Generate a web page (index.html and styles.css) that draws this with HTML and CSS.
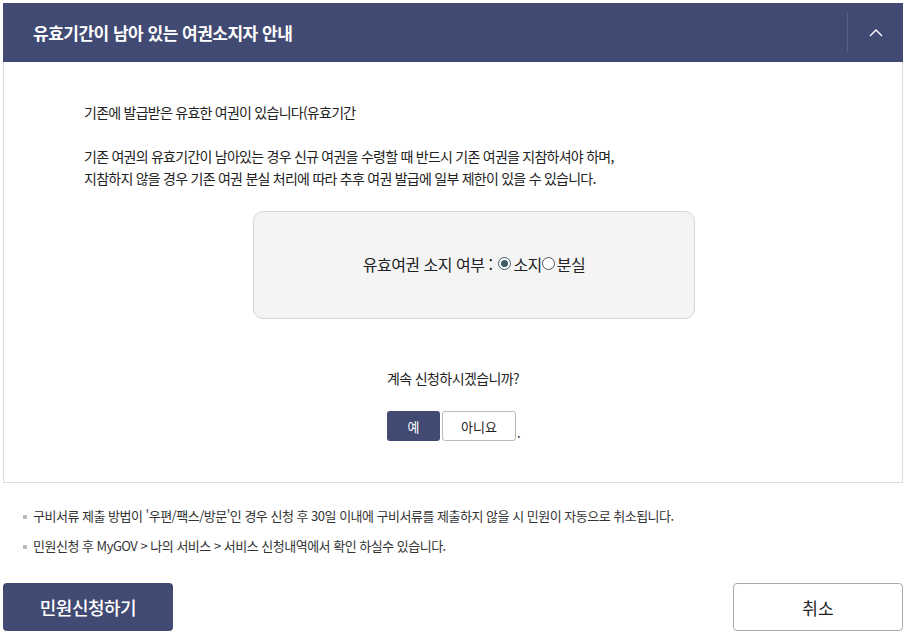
FILE: index.html
```html
<!DOCTYPE html>
<html lang="ko">
<head>
<meta charset="utf-8">
<link rel="stylesheet" href="styles.css">
</head>
<body>
<div class="page">
  <section class="panel">
    <header class="panel-head">
      <h2 class="panel-title">유효기간이 남아 있는 여권소지자 안내</h2>
      <button class="toggle" aria-label="접기">
        <svg width="14" height="9" viewBox="0 0 14 9"><path d="M1 8 L7 2 L13 8" fill="none" stroke="#fff" stroke-width="1.4"/></svg>
      </button>
    </header>
    <div class="panel-body">
      <p class="para">기존에 발급받은 유효한 여권이 있습니다(유효기간</p>
      <p class="para">기존 여권의 유효기간이 남아있는 경우 신규 여권을 수령할 때 반드시 기존 여권을 지참하셔야 하며,<br>지참하지 않을 경우 기존 여권 분실 처리에 따라 추후 여권 발급에 일부 제한이 있을 수 있습니다.</p>
      <div class="choice-box">
        <span class="choice-label">유효여권 소지 여부 :</span>
        <label class="radio"><span class="dot checked"></span>소지</label>
        <label class="radio"><span class="dot"></span>분실</label>
      </div>
      <p class="question">계속 신청하시겠습니까?</p>
      <div class="yn">
        <button class="btn-yes">예</button>
        <button class="btn-no">아니요</button><span class="period">.</span>
      </div>
    </div>
  </section>
  <ul class="notes">
    <li>구비서류 제출 방법이 '우편/팩스/방문'인 경우 신청 후 30일 이내에 구비서류를 제출하지 않을 시 민원이 자동으로 취소됩니다.</li>
    <li>민원신청 후 MyGOV &gt; 나의 서비스 &gt; 서비스 신청내역에서 확인 하실수 있습니다.</li>
  </ul>
  <div class="actions">
    <button class="btn-primary">민원신청하기</button>
    <button class="btn-cancel">취소</button>
  </div>
</div>
</body>
</html>
```
FILE: styles.css
```css
* { box-sizing: border-box; }
html, body { margin: 0; padding: 0; background: #fff; }
body {
  font-family: "Noto Sans CJK KR", "Noto Sans", sans-serif;
  color: #222;
}
.page { padding: 3px 3px 0 3px; }
.panel-head {
  height: 59px;
  background: #414a72;
  display: flex;
  align-items: center;
  justify-content: space-between;
  padding-left: 30px;
}
.panel-title {
  margin: 0;
  color: #fff;
  font-size: 17px;
  font-weight: 700;
  letter-spacing: -0.5px;
}
.toggle {
  width: 56px;
  height: 39px;
  border: 0;
  border-left: 1px solid #59618a;
  background: transparent;
  display: flex;
  align-items: center;
  justify-content: center;
  padding: 0;
}
.panel-body {
  border: 1px solid #dcdcdc;
  border-top: 0;
  padding: 39px 0 41px 80px;
}
.para {
  margin: 0 0 22px;
  font-size: 14px;
  line-height: 22px;
  letter-spacing: -0.75px;
  color: #222;
}
.choice-box {
  width: 442px;
  height: 108px;
  margin: 0 0 0 169px;
  background: #f4f4f4;
  border: 1px solid #d6d6d6;
  border-radius: 10px;
  display: flex;
  align-items: center;
  justify-content: center;
  padding-bottom: 3px;
  font-size: 16px;
  letter-spacing: -0.5px;
  color: #222;
}
.choice-label { margin-right: 6px; }
.radio { display: inline-flex; align-items: center; }
.dot {
  width: 13px; height: 13px;
  border: 1px solid #555;
  border-radius: 50%;
  display: inline-block;
  margin-right: 2px;
  position: relative;
  background: #fff;
}
.dot.checked { border-color: #3e5d66; }
.dot.checked::after {
  content: "";
  position: absolute;
  left: 2px; top: 2px;
  width: 7px; height: 7px;
  border-radius: 50%;
  background: #3e5d66;
}
.question {
  margin: 48px 0 0 -80px;
  text-align: center;
  font-size: 14px;
  line-height: 22px;
  letter-spacing: -0.6px;
}
.yn {
  margin: 22px 0 0 303px;
  display: flex;
  align-items: flex-end;
}
.btn-yes {
  width: 53px; height: 30px;
  background: #414a72;
  color: #fff;
  border: 0;
  border-radius: 3px;
  font-family: inherit;
  font-size: 13px;
  padding: 0;
}
.btn-no {
  width: 74px; height: 30px;
  margin-left: 2px;
  background: #fff;
  color: #222;
  border: 1px solid #bbb;
  border-radius: 3px;
  font-family: inherit;
  font-size: 13px;
  padding: 0;
}
.period { font-size: 13px; margin-left: 1px; line-height: 16px; }
.notes {
  list-style: none;
  margin: 23px 0 0;
  padding: 0 0 0 20px;
}
.notes li {
  position: relative;
  padding-left: 10px;
  font-size: 13px;
  line-height: 20px;
  letter-spacing: -0.5px;
  color: #333;
  margin-bottom: 10px;
}
.notes li::before {
  content: "";
  position: absolute;
  left: 0; top: 9px;
  width: 4px; height: 4px;
  background: #bbb;
}
.actions {
  margin-top: 27px;
  display: flex;
  justify-content: space-between;
}
.btn-primary {
  width: 170px; height: 48px;
  background: #414a72;
  color: #fff;
  border: 0;
  border-radius: 4px;
  font-family: inherit;
  font-size: 18px;
  font-weight: 500;
  letter-spacing: -0.5px;
}
.btn-cancel {
  width: 170px; height: 48px;
  background: #fff;
  color: #222;
  border: 1px solid #aaa;
  border-radius: 4px;
  font-family: inherit;
  font-size: 17px;
}
```
